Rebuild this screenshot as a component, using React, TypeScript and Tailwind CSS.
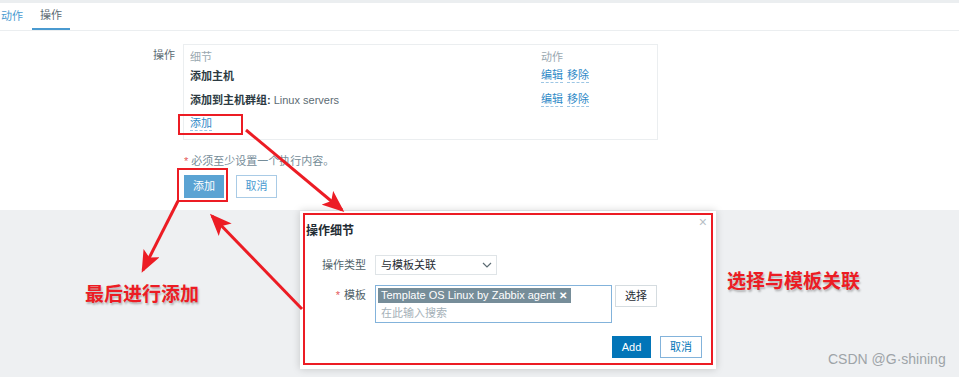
import React from 'react';

const font = "font-['Liberation_Sans','Noto_Sans_CJK_SC',sans-serif]";

function Link({ children }: { children: React.ReactNode }) {
  return <span className="text-[#2f8ac7] border-b border-dashed border-[#9cc6e4] leading-[13px]">{children}</span>;
}

function Arrows() {
  return (
    <svg className="absolute inset-0 pointer-events-none" width="959" height="377">
      <defs>
        <marker id="ah" viewBox="0 0 22 18" refX="19" refY="9" markerWidth="22" markerHeight="18" orient="auto" markerUnits="userSpaceOnUse">
          <path d="M0 0 L22 9 L0 18 L5 9 Z" fill="#ec1c24" />
        </marker>
      </defs>
      <line x1="246" y1="130" x2="342" y2="210" stroke="#ec1c24" strokeWidth="3" markerEnd="url(#ah)" />
      <line x1="178" y1="201" x2="143" y2="270" stroke="#ec1c24" strokeWidth="3" markerEnd="url(#ah)" />
      <line x1="302" y1="309" x2="212" y2="216" stroke="#ec1c24" strokeWidth="3" markerEnd="url(#ah)" />
    </svg>
  );
}

export default function App() {
  return (
    <div className={`relative w-[959px] h-[377px] overflow-hidden bg-white text-[11px] text-[#1f2c33] ${font}`}>
      <div className="h-[210px] flex flex-col">
        <div className="h-[3px] bg-[#ebeef0]" />
        <div className="flex h-[28px] border-b border-[#ebeef0]">
          <div className="-ml-[8px] px-[9px] flex items-center text-[#4a9ad0]">动作</div>
          <div className="px-[8px] flex items-center text-[#5c6b73] border-b-2 border-[#4a9ad0]">操作</div>
        </div>

        <div className="flex mt-[13px]">
          <div className="w-[175px] text-right pt-[4px] leading-[14px] text-[#5c6b73]">操作</div>
          <div className="ml-[8px] w-[475px] flex flex-col">
            <div className="h-[96px] border border-[#ebeef0] pt-[5px] pl-[6px]">
              <div className="grid grid-cols-[351px_1fr]">
                <div className="h-[14px] leading-[14px] text-[#9aa8b0]">细节</div>
                <div className="h-[14px] leading-[14px] text-[#9aa8b0]">动作</div>

                <div className="h-[24px] flex items-center font-bold text-[#2c3a42]">添加主机</div>
                <div className="h-[24px] flex items-center gap-[4px]">
                  <Link>编辑</Link>
                  <Link>移除</Link>
                </div>

                <div className="h-[24px] flex items-center">
                  <span className="font-bold text-[#2c3a42]">添加到主机群组:</span>
                  <span className="ml-[3px] text-[#5c6b73]">Linux servers</span>
                </div>
                <div className="h-[24px] flex items-center gap-[4px]">
                  <Link>编辑</Link>
                  <Link>移除</Link>
                </div>

                <div className="h-[24px] flex items-center">
                  <Link>添加</Link>
                </div>
              </div>
            </div>

            <div className="mt-[13px] h-[16px] flex items-center pl-[1px] text-[#768d99]">
              <span className="text-[#e45959] mr-[3px]">*</span>
              必须至少设置一个执行内容。
            </div>

            <div className="mt-[6px] flex gap-[12px] pl-[1px]">
              <div className="w-[40px] h-[23px] flex items-center justify-center bg-[#5aa3d3] text-white">添加</div>
              <div className="w-[41px] h-[23px] flex items-center justify-center border border-[#a9cbe6] text-[#4a9ad0] bg-white">取消</div>
            </div>
          </div>
        </div>
      </div>

      <div className="h-[167px] bg-[#eef0f2]" />

      {/* red frames around clicked items */}
      <div className="absolute left-[178px] top-[114px] w-[65px] h-[21px] border-2 border-[#ec1c24]" />
      <div className="absolute left-[177px] top-[168px] w-[51px] h-[34px] border-2 border-[#ec1c24]" />

      {/* dialog */}
      <div className="absolute left-[300px] top-[211px] w-[416px] h-[158px] bg-white shadow-[0_0_8px_rgba(0,0,0,0.18)] flex flex-col">
        <div className="absolute right-[9px] top-[1px] text-[14px] text-[#b7c0c6]">×</div>
        <div className="pl-[6px] pt-[13px] leading-[14px] text-[12px] font-bold">操作细节</div>

        <div className="mt-[17px] flex">
          <div className="w-[66px] text-right leading-[20px] text-[#4f5f68]">操作类型</div>
          <div className="ml-[9px] w-[122px] h-[20px] border border-[#dfe4e7] pl-[5px] pr-[4px] flex items-center justify-between">
            <span>与模板关联</span>
            <svg width="10" height="6" viewBox="0 0 10 6">
              <path d="M1 1 L5 5 L9 1" fill="none" stroke="#5c6b73" strokeWidth="1.2" />
            </svg>
          </div>
        </div>

        <div className="mt-[10px] flex">
          <div className="w-[66px] text-right pt-[3px] leading-[14px] text-[#4f5f68]">
            <span className="text-[#e45959] mr-[4px]">*</span>模板
          </div>
          <div className="ml-[9px] w-[237px] h-[38px] border border-[#83b3db] p-[2px] flex flex-col">
            <div className="self-start h-[15px] bg-[#768d99] text-white pl-[3px] pr-[4px] flex items-center gap-[4px] leading-[15px]">
              <span>Template OS Linux by Zabbix agent</span>
              <span className="font-bold text-[10px]">✕</span>
            </div>
            <div className="pl-[3px] mt-[3px] leading-[14px] text-[#a5b1b8]">在此输入搜索</div>
          </div>
          <div className="ml-[3px] w-[42px] h-[22px] border border-[#d5dce0] flex items-center justify-center">选择</div>
        </div>

        <div className="mt-[13px] flex justify-end pr-[14px] gap-[9px]">
          <div className="w-[39px] h-[22px] bg-[#0275b8] text-white flex items-center justify-center">Add</div>
          <div className="w-[42px] h-[22px] border border-[#83b3db] text-[#0275b8] flex items-center justify-center">取消</div>
        </div>
      </div>
      <div className="absolute left-[303px] top-[213px] w-[410px] h-[152px] border-2 border-[#ec1c24]" />

      <Arrows />

      <div className="absolute left-[85px] top-[285px] text-[19px] leading-[20px] font-bold text-[#ec1c24] [text-shadow:1px_2px_2px_rgba(0,0,0,0.25)]">
        最后进行添加
      </div>
      <div className="absolute left-[727px] top-[272px] text-[19px] leading-[20px] font-bold text-[#ec1c24] [text-shadow:1px_2px_2px_rgba(0,0,0,0.25)]">
        选择与模板关联
      </div>
      <div className="absolute left-[828px] top-[351px] text-[14px] leading-[16px] text-[#9ea4a8]">CSDN @G·shining</div>
    </div>
  );
}
